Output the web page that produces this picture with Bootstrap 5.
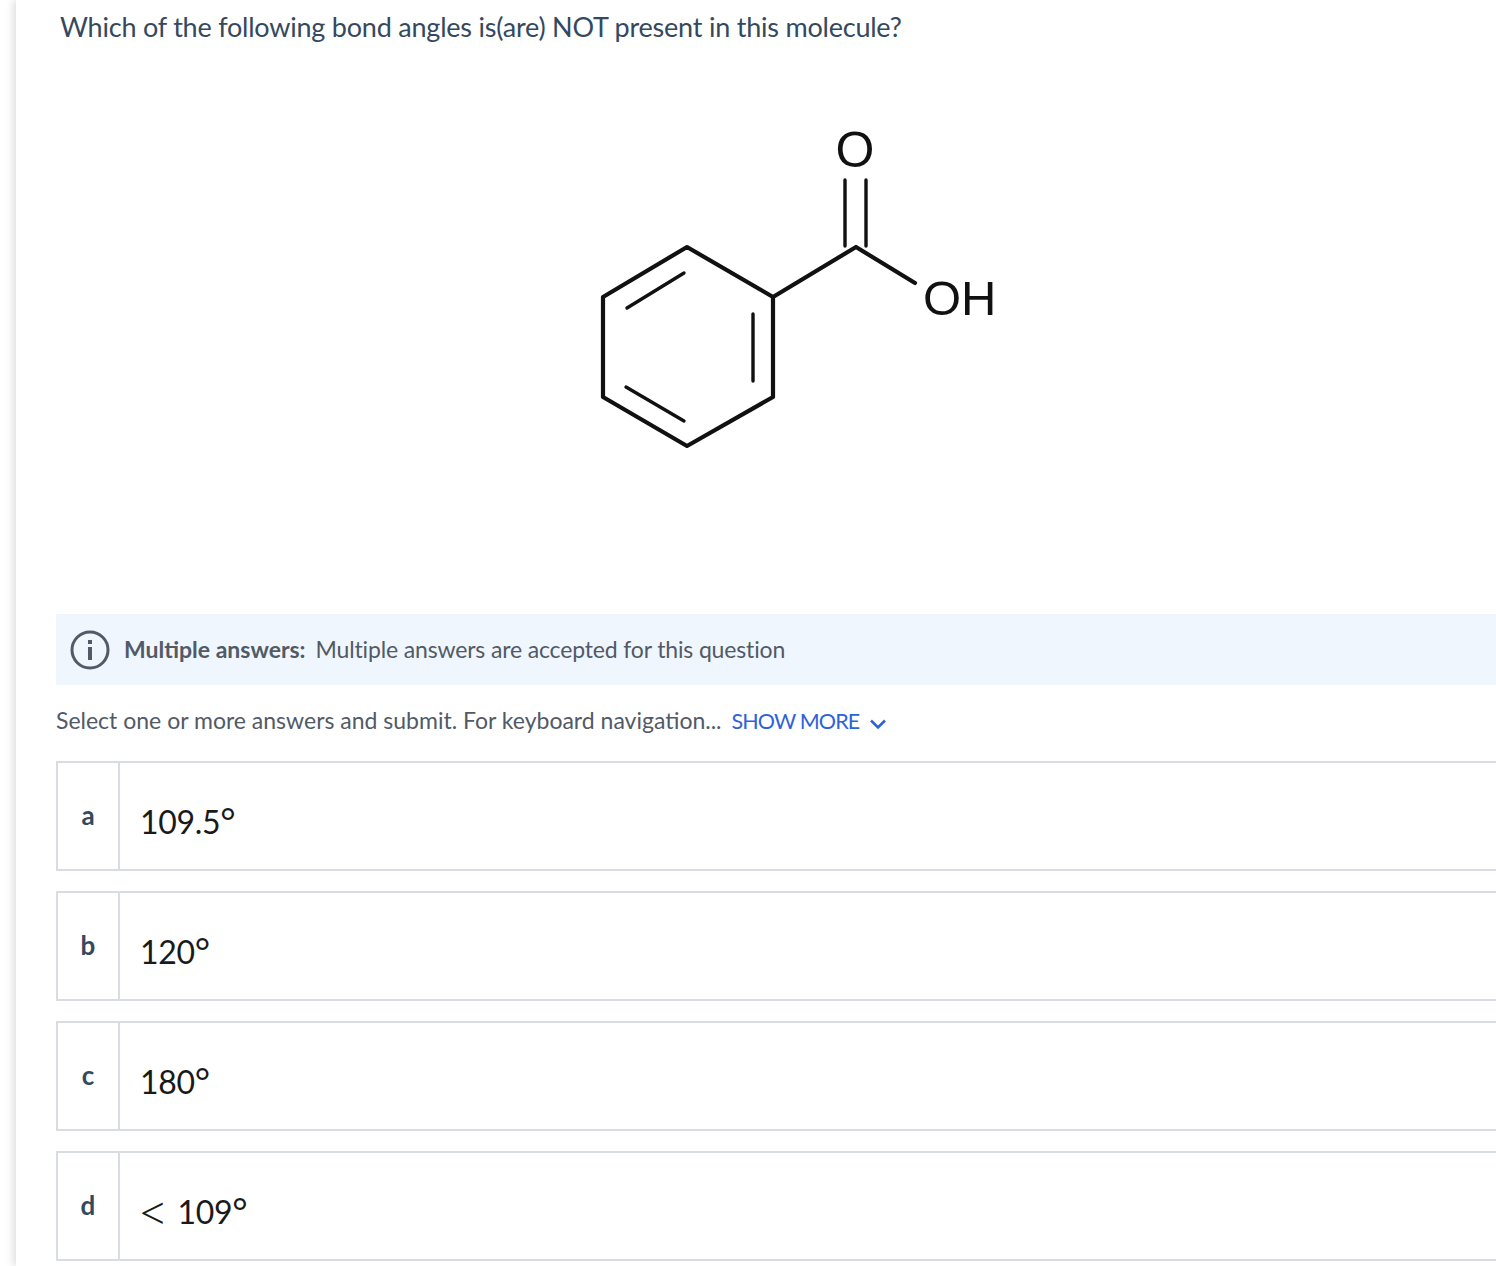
<!DOCTYPE html>
<html lang="en">
<head>
<meta charset="utf-8">
<title>Question</title>
<link href="https://cdn.jsdelivr.net/npm/bootstrap@5.3.0/dist/css/bootstrap.min.css" rel="stylesheet">
<style>
html,body{height:100%;}
body{background:#fff;font-family:Lato,"Noto Sans",sans-serif;overflow:hidden;color:#49525e;}
.sheet{margin-left:16px;height:1266px;background:#fff;box-shadow:-3px 0 8px rgba(0,0,0,.13);overflow:hidden;padding-left:40px;}
.prompt{font-size:27px;letter-spacing:-.22px;line-height:34px;color:#34495e;padding:10px 0 0 4px;margin:0;height:56px;}
.figure-wrap{height:558px;padding:64px 0 0 534px;}
.figure-wrap svg{display:block;filter:blur(.35px);}
.notice{height:71px;background:#f0f6fd;padding-left:14px;gap:14px;font-size:23px;letter-spacing:-.15px;color:#515a66;}
.notice strong{font-weight:700;letter-spacing:0;margin-right:10px;}
.hint{height:76px;font-size:23px;color:#515a66;padding-top:19px;line-height:32px;}
.more{color:#2e62d9;text-decoration:none;margin-left:4px;font-size:21.5px;letter-spacing:-.85px;}
.more svg{margin-left:10px;vertical-align:-2px;}
.choice{height:110px;border:2px solid #d9dce1;border-right:0;margin-bottom:20px;background:#fff;}
.letter{width:62px;border-right:2px solid #d9dce1;font-weight:700;font-size:26px;color:#34495e;padding-top:35px;line-height:34px;text-align:center;}
.value{font-size:32px;letter-spacing:-.3px;color:#1a1a1a;padding:39px 0 0 20px;line-height:40px;}
.deg{font-size:37px;line-height:0;font-weight:400;vertical-align:-1px;}
.lt{font-family:"Liberation Serif",serif;font-size:44px;font-weight:400;line-height:0;vertical-align:-4px;margin-right:13px;}
</style>
</head>
<body>
<main class="sheet">
  <p class="prompt">Which of the following bond angles is(are) NOT present in this molecule?</p>
  <div class="figure-wrap">
    <svg width="420" height="340" viewBox="590 120 420 340" role="img" aria-label="Benzoic acid structure">
      <g fill="none" stroke="#111" stroke-width="4.2" stroke-linecap="round" stroke-linejoin="round">
        <path d="M687 247 773 297V397L687 446 603 397V297Z"/>
        <path d="M773 297 856 247 915 283"/>
      </g>
      <g fill="none" stroke="#111" stroke-width="3.4" stroke-linecap="round">
        <path d="M627 308 684 273M753 314V381M626 387 684 421"/>
        <path d="M845 180V246M866 180V246"/>
      </g>
      <text x="855" y="167" text-anchor="middle" font-family="Liberation Sans" font-size="50" fill="#111">O</text>
      <text x="923" y="315" font-family="Liberation Sans" font-size="49" fill="#111">OH</text>
    </svg>
  </div>
  <div class="notice d-flex align-items-center">
    <svg width="40" height="40" viewBox="0 0 40 40" aria-hidden="true"><circle cx="20" cy="20" r="18" fill="none" stroke="#515a66" stroke-width="3"/><rect x="18" y="17" width="4" height="13" fill="#515a66"/><rect x="18" y="10" width="4" height="4" fill="#515a66"/></svg>
    <span><strong>Multiple answers:</strong>Multiple answers are accepted for this question</span>
  </div>
  <div class="hint">Select one or more answers and submit. For keyboard navigation... <a class="more" href="#">SHOW MORE<svg width="18" height="14" viewBox="0 0 18 14" aria-hidden="true"><path d="M2 3.5 9 10.5 16 3.5" fill="none" stroke="#2e62d9" stroke-width="2.6"/></svg></a></div>
  <div class="choice d-flex"><div class="letter">a</div><div class="value">109.5<span class="deg">°</span></div></div>
  <div class="choice d-flex"><div class="letter">b</div><div class="value">120<span class="deg">°</span></div></div>
  <div class="choice d-flex"><div class="letter">c</div><div class="value">180<span class="deg">°</span></div></div>
  <div class="choice d-flex"><div class="letter">d</div><div class="value"><span class="lt">&lt;</span>109<span class="deg">°</span></div></div>
</main>
<script src="https://cdn.jsdelivr.net/npm/bootstrap@5.3.0/dist/js/bootstrap.bundle.min.js"></script>
</body>
</html>
